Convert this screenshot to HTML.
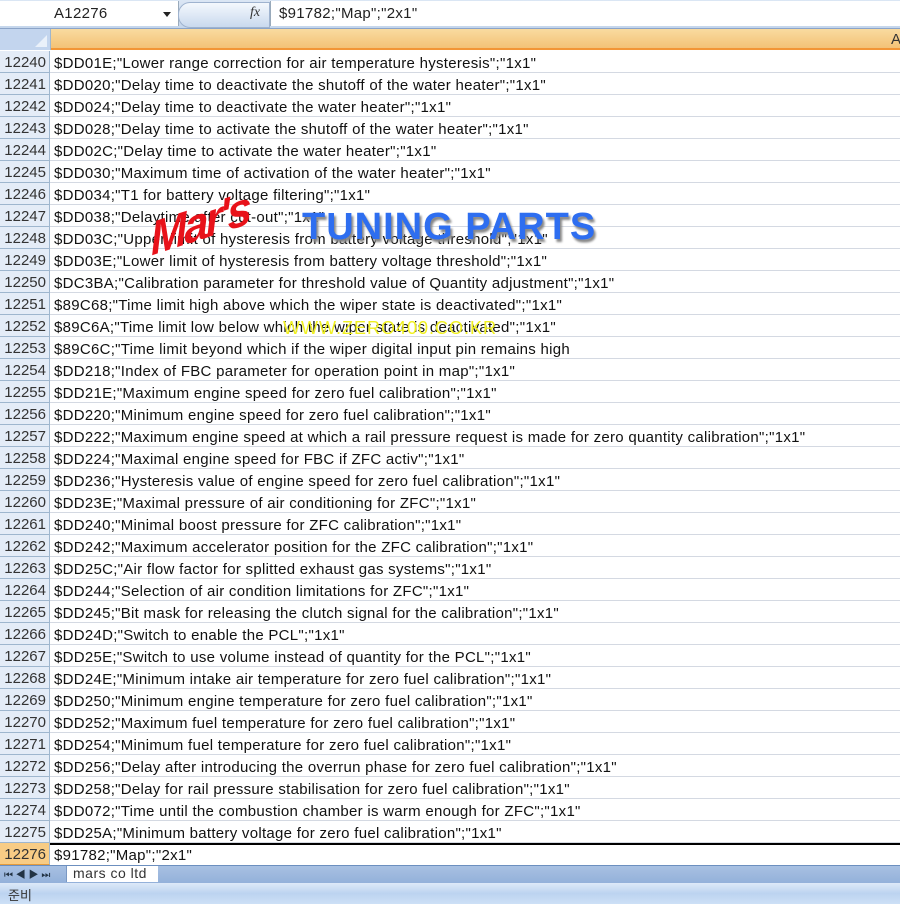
<!DOCTYPE html>
<html><head><meta charset="utf-8"><style>
body{margin:0;width:900px;height:904px;overflow:hidden;background:#fff;font-family:"Liberation Sans","Noto Sans CJK KR",sans-serif;position:relative}
.fb{position:absolute;left:0;top:0;width:900px;height:28px;background:linear-gradient(#dbe6f4,#c5d6ec);border-bottom:1px solid #8ba4c8}
.nb{position:absolute;left:0;top:1px;width:178px;height:25px;background:#fff;border-right:1px solid #9ab}
.nb span{position:absolute;left:54px;top:4px;font-size:15px;color:#222;letter-spacing:0.3px}
.arr{position:absolute;left:163px;top:11px;width:0;height:0;border-left:4px solid transparent;border-right:4px solid transparent;border-top:5px solid #222}
.pill{position:absolute;left:178px;top:2px;width:90px;height:24px;border-radius:12px 0 0 12px;background:linear-gradient(#f4f8fd,#c9d9ee);border:1px solid #9fb3cf}
.fx{position:absolute;left:250px;top:5px;font:italic 14px "Liberation Serif",serif;color:#333}
.fi{position:absolute;left:270px;top:1px;width:630px;height:25px;background:#fff;border-left:1px solid #9ab}
.fi span{position:absolute;left:8px;top:4px;font-size:15px;color:#222;letter-spacing:0.3px}
.ch{position:absolute;left:0;top:29px;width:900px;height:21px;background:linear-gradient(#f9dba0,#f3c276);border-bottom:2px solid #f29536;box-sizing:border-box}
.corner{position:absolute;left:0;top:29px;width:50px;height:21px;background:#c3d5ee;border-right:1px solid #9eb6ce}
.corner:after{content:"";position:absolute;right:3px;bottom:3px;border-left:12px solid transparent;border-bottom:12px solid #eaf1fa}
.ch span{position:absolute;left:891px;top:2px;font-size:15px;color:#333}
.row{position:absolute;left:0;width:900px;height:22px;border-bottom:1px solid #d4d9e2;box-sizing:border-box}
.rh{position:absolute;left:0;top:0;width:50px;height:22px;background:#e4ecf7;border-right:1px solid #9eb6ce;border-bottom:1px solid #9eb6ce;box-sizing:border-box;text-align:right;padding-right:3px;font-size:15px;line-height:24px;color:#333}
.c{position:absolute;left:54px;top:1px;font-size:15px;line-height:23px;color:#111;white-space:nowrap;letter-spacing:0.28px}
.sel .rh{background:#f8cc85;border-bottom-color:#e39b3d}
.tabs{position:absolute;left:0;top:865px;width:900px;height:17px;background:linear-gradient(#a8c0e2,#93b1da);border-top:1px solid #6c8fbf;border-bottom:1px solid #5c7fb0}
.tab{position:absolute;left:66px;top:0;width:92px;height:16px;background:#fff;font-size:14px;line-height:15px;color:#333;padding-left:6px;box-sizing:border-box;border-left:1px solid #7a98c3;letter-spacing:0.5px}
.st{position:absolute;left:0;top:883px;width:900px;height:21px;background:linear-gradient(#dde9f8,#bcd3f0 50%,#cde0f6)}
.st span{position:absolute;left:8px;top:2px;font-size:13px;color:#333}
.logo1{position:absolute;left:148px;top:196px;font:italic 900 46px "Liberation Sans",sans-serif;color:#e8121a;transform:rotate(-18deg) skewX(-15deg);letter-spacing:-3px}
.logo2{position:absolute;left:302px;top:206px;font:bold 38px "Liberation Sans",sans-serif;color:#2e6ef0;text-shadow:2px 3px 2px #888;letter-spacing:1px}
.wm{position:absolute;left:283px;top:318px;font:18px "Liberation Sans",sans-serif;color:#f0f020;letter-spacing:1px}
</style></head><body>
<div class="fb"><div class="nb"><span>A12276</span><div class="arr"></div></div><div class="pill"></div><div class="fx">fx</div><div class="fi"><span>$91782;"Map";"2x1"</span></div></div>
<div class="ch"><span>A</span></div><div class="corner"></div>
<div id="rows"></div>
<div class="row sel" style="top:843px;border-top:2px solid #000;border-bottom:none"><div class="rh" style="top:-2px">12276</div><div class="c" style="top:-1px">$91782;"Map";"2x1"</div></div>
<div class="tabs"><span style="position:absolute;left:4px;top:0;font-size:10px;color:#234">⏮ ◀ ▶ ⏭</span><div class="tab">mars co ltd</div></div>
<div class="st"><span>준비</span></div>
<div class="logo1">Mar's</div>
<div class="logo2">TUNING PARTS</div>
<div class="wm">WWW.ZERO400.CO.KR</div>
<script>
var t=['$DD01E;"Lower range correction for air temperature hysteresis";"1x1"','$DD020;"Delay time to deactivate the shutoff of the water heater";"1x1"','$DD024;"Delay time to deactivate the water heater";"1x1"','$DD028;"Delay time to activate the shutoff of the water heater";"1x1"','$DD02C;"Delay time to activate the water heater";"1x1"','$DD030;"Maximum time of activation of the water heater";"1x1"','$DD034;"T1 for battery voltage filtering";"1x1"','$DD038;"Delaytime after cut-out";"1x1"','$DD03C;"Upper limit of hysteresis from battery voltage threshold";"1x1"','$DD03E;"Lower limit of hysteresis from battery voltage threshold";"1x1"','$DC3BA;"Calibration parameter for threshold value of Quantity adjustment";"1x1"','$89C68;"Time limit high above which the wiper state is deactivated";"1x1"','$89C6A;"Time limit low below which the wiper state is deactivated";"1x1"','$89C6C;"Time limit beyond which if the wiper digital input pin remains high','$DD218;"Index of FBC parameter for operation point in map";"1x1"','$DD21E;"Maximum engine speed for zero fuel calibration";"1x1"','$DD220;"Minimum engine speed for zero fuel calibration";"1x1"','$DD222;"Maximum engine speed at which a rail pressure request is made for zero quantity calibration";"1x1"','$DD224;"Maximal engine speed for FBC if ZFC activ";"1x1"','$DD236;"Hysteresis value of engine speed for zero fuel calibration";"1x1"','$DD23E;"Maximal pressure of air conditioning for ZFC";"1x1"','$DD240;"Minimal boost pressure for ZFC calibration";"1x1"','$DD242;"Maximum accelerator position for the ZFC calibration";"1x1"','$DD25C;"Air flow factor for splitted exhaust gas systems";"1x1"','$DD244;"Selection of air condition limitations for ZFC";"1x1"','$DD245;"Bit mask for releasing the clutch signal for the calibration";"1x1"','$DD24D;"Switch to enable the PCL";"1x1"','$DD25E;"Switch to use volume instead of quantity for the PCL";"1x1"','$DD24E;"Minimum intake air temperature for zero fuel calibration";"1x1"','$DD250;"Minimum engine temperature for zero fuel calibration";"1x1"','$DD252;"Maximum fuel temperature for zero fuel calibration";"1x1"','$DD254;"Minimum fuel temperature for zero fuel calibration";"1x1"','$DD256;"Delay after introducing the overrun phase for zero fuel calibration";"1x1"','$DD258;"Delay for rail pressure stabilisation for zero fuel calibration";"1x1"','$DD072;"Time until the combustion chamber is warm enough for ZFC";"1x1"','$DD25A;"Minimum battery voltage for zero fuel calibration";"1x1"'];
var h='';for(var i=0;i<t.length;i++){h+='<div class="row" style="top:'+(51+i*22)+'px"><div class="rh">'+(12240+i)+'</div><div class="c">'+t[i].replace(/&/g,'&amp;').replace(/</g,'&lt;')+'</div></div>';}
document.getElementById('rows').innerHTML=h;
</script>
</body></html>
